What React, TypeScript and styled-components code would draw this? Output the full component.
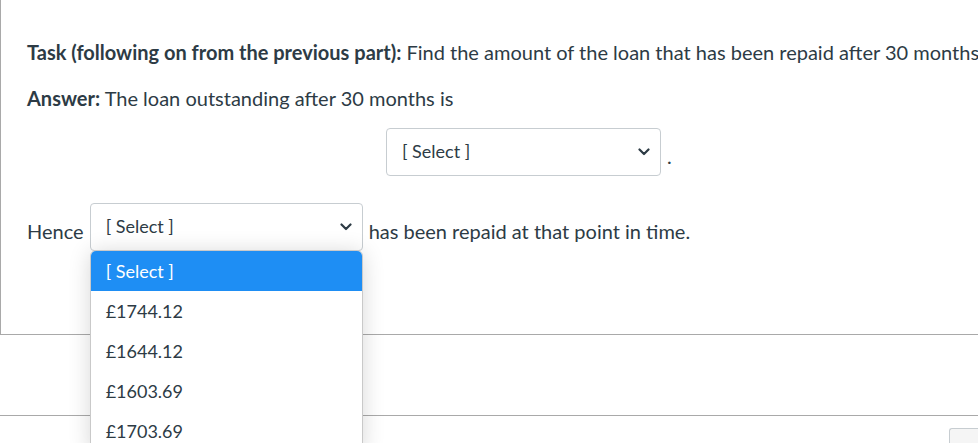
import React from "react";
import styled, { createGlobalStyle } from "styled-components";

const GlobalStyle = createGlobalStyle`
  html, body {
    margin: 0;
    padding: 0;
    background: #ffffff;
  }
  body {
    font-family: Lato, "Open Sans", sans-serif;
    color: #2d3b45;
    overflow: hidden;
  }
`;

const Page = styled.div`
  width: 978px;
  height: 443px;
  overflow: hidden;
`;

const Question = styled.section`
  border-left: 1px solid #a9a9a9;
  border-bottom: 1px solid #a9a9a9;
  padding: 39px 0 83px 26px;
  font-size: 20px;
  line-height: 27px;
`;

const Para = styled.p`
  margin: 0 0 19px;
  white-space: nowrap;

  &:last-of-type {
    margin-bottom: 16px;
  }
`;

const Row = styled.div<{ $indent?: number; $top?: number }>`
  display: flex;
  align-items: center;
  gap: 6px;
  padding-left: ${(p) => p.$indent ?? 0}px;
  margin-top: ${(p) => p.$top ?? 0}px;
  white-space: nowrap;
`;

const Inline = styled.span`
  padding-top: 8px;
`;

const SelectWrap = styled.div`
  position: relative;
`;

const SelectBox = styled.div<{ $width: number }>`
  box-sizing: border-box;
  width: ${(p) => p.$width}px;
  height: 48px;
  border: 1px solid #c7cdd1;
  border-radius: 4px;
  background: #fff;
  display: flex;
  align-items: center;
  justify-content: space-between;
  padding: 0 10px 0 15px;
  font-size: 18px;
  color: #2d3b45;
`;

const SelectText = styled.span`
  margin-top: -2px;
`;

const Menu = styled.ul`
  position: absolute;
  top: calc(100% - 1px);
  left: 0;
  box-sizing: border-box;
  width: 273px;
  margin: 0;
  padding: 0;
  list-style: none;
  background: #fff;
  border: 1px solid #c9c9c9;
  border-radius: 6px 6px 0 0;
  box-shadow: 0 2px 22px rgba(0, 0, 0, 0.16);
  overflow: hidden;
  z-index: 5;
`;

const MenuItem = styled.li<{ $active?: boolean }>`
  height: 40px;
  display: flex;
  align-items: center;
  padding-left: 15px;
  font-size: 18px;
  line-height: 1;
  color: ${(p) => (p.$active ? "#ffffff" : "#2d3b45")};
  background: ${(p) => (p.$active ? "#1e8ef4" : "#ffffff")};
`;

const Gap = styled.div`
  height: 80px;
  border-bottom: 1px solid #a9a9a9;
`;

const Footer = styled.div`
  display: flex;
  justify-content: flex-end;
  align-items: flex-start;
  gap: 18px;
  padding-top: 12px;
`;

const Saved = styled.span`
  margin-top: 14px;
  font-size: 14px;
  color: #b8b8b8;
`;

const NextButton = styled.div`
  width: 28px;
  height: 30px;
  border: 1px solid #c7cdd1;
  border-right: none;
  border-radius: 3px 0 0 3px;
  background: #f5f5f5;
`;

const Chevron = () => (
  <svg width="12" height="8" viewBox="0 0 12 8" aria-hidden="true">
    <polyline
      points="1.5,1.5 6,6 10.5,1.5"
      fill="none"
      stroke="#2d3b45"
      strokeWidth="2.2"
      strokeLinecap="round"
      strokeLinejoin="round"
    />
  </svg>
);

const Select: React.FC<{ width: number; open?: boolean; options?: string[] }> = ({
  width,
  open,
  options = [],
}) => (
  <SelectWrap>
    <SelectBox $width={width}>
      <SelectText>[ Select ]</SelectText>
      <Chevron />
    </SelectBox>
    {open && (
      <Menu>
        {options.map((o, i) => (
          <MenuItem key={o} $active={i === 0}>
            {o}
          </MenuItem>
        ))}
      </Menu>
    )}
  </SelectWrap>
);

const options = ["[ Select ]", "£1744.12", "£1644.12", "£1603.69", "£1703.69"];

const App: React.FC = () => (
  <Page>
    <GlobalStyle />
    <Question>
      <Para>
        <b>Task (following on from the previous part):</b> Find the amount of the loan that has been
        repaid after 30 months
      </Para>
      <Para>
        <b>Answer:</b> The loan outstanding after 30 months is
      </Para>
      <Row $indent={359}>
        <Select width={275} />
        <Inline>.</Inline>
      </Row>
      <Row $top={27}>
        <Inline>Hence</Inline>
        <Select width={273} open options={options} />
        <Inline>has been repaid at that point in time.</Inline>
      </Row>
    </Question>
    <Gap />
    <Footer>
      <Saved>Quiz saved at 10:17</Saved>
      <NextButton />
    </Footer>
  </Page>
);

export default App;
